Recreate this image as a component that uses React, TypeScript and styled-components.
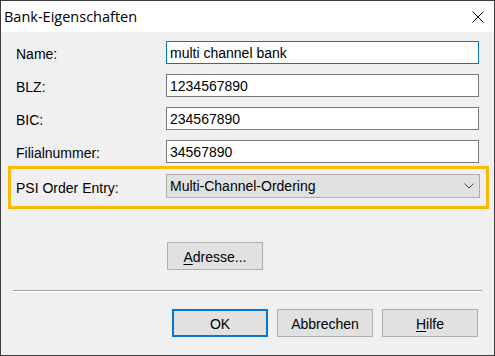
import React from 'react';
import styled, { createGlobalStyle } from 'styled-components';

const GlobalStyle = createGlobalStyle`
  html, body {
    margin: 0;
    padding: 0;
    background: #ffffff;
  }
`;

const Window = styled.div`
  width: 495px;
  height: 356px;
  box-sizing: border-box;
  border: 1px solid #3c3c3c;
  display: flex;
  flex-direction: column;
  font-family: 'Liberation Sans', Arial, sans-serif;
  font-size: 14px;
  color: #000;
`;

const TitleBar = styled.div`
  height: 31px;
  flex: none;
  background: #ffffff;
  display: flex;
  align-items: center;
  justify-content: space-between;
  padding: 0 10px 0 3px;
`;

const Title = styled.span`
  font-family: 'Open Sans', 'Noto Sans', sans-serif;
  font-size: 14.5px;
  color: #000;
  padding-bottom: 1px;
`;

const CloseButton = styled.button`
  border: none;
  background: none;
  padding: 0;
  width: 12px;
  height: 12px;
  display: flex;
  cursor: pointer;
`;

const Body = styled.div`
  flex: 1;
  background: #f0f0f0;
  padding-top: 9px;
  display: flex;
  flex-direction: column;
`;

const Form = styled.div`
  display: grid;
  grid-template-columns: 150px 313px;
  grid-auto-rows: 23px;
  row-gap: 10px;
  padding-left: 15px;
  align-items: center;
`;

const Label = styled.label`
  padding-top: 3px;
`;

const TextInput = styled.input<{ $focused?: boolean }>`
  box-sizing: border-box;
  height: 23px;
  width: 313px;
  margin: 0;
  border: 1px solid ${(p) => (p.$focused ? '#0078d7' : '#7a7a7a')};
  background: #fff;
  padding: 0 3px;
  font: inherit;
  color: #000;
  outline: none;
`;

const Highlight = styled.div`
  margin: 3px 0 0 7px;
  width: 481px;
  box-sizing: border-box;
  border: 3px solid #fbb900;
  padding: 5px 6px 8px 5px;
  display: grid;
  grid-template-columns: 150px 1fr;
  align-items: center;
`;

const Select = styled.div`
  box-sizing: border-box;
  height: 24px;
  border: 1px solid #adadad;
  background: #e1e1e1;
  display: flex;
  align-items: center;
  justify-content: space-between;
  padding: 0 5px 0 3px;
`;

const Button = styled.button<{ $default?: boolean }>`
  box-sizing: border-box;
  width: 96px;
  height: 28px;
  margin: 0;
  background: #e1e1e1;
  border: ${(p) => (p.$default ? '2px solid #0078d7' : '1px solid #adadad')};
  font: inherit;
  color: #000;
  padding: 0;
  padding-top: 1px;
`;

const AddressRow = styled.div`
  margin-top: 33px;
  padding-left: 166px;
`;

const Separator = styled.hr`
  margin: 20px 12px 0 12px;
  width: 469px;
  border: none;
  border-top: 1px solid #a0a0a0;
  border-bottom: 1px solid #ffffff;
  height: 0;
`;

const ButtonRow = styled.div`
  margin-top: 17px;
  padding-left: 171px;
  display: flex;
  gap: 9px;
`;

const Accel = styled.span`
  text-decoration: underline;
  text-underline-offset: 2px;
`;

const fields = [
  { label: 'Name:', value: 'multi channel bank', focused: true },
  { label: 'BLZ:', value: '1234567890' },
  { label: 'BIC:', value: '234567890' },
  { label: 'Filialnummer:', value: '34567890' },
];

const App: React.FC = () => {
  return (
    <>
      <GlobalStyle />
      <Window>
        <TitleBar>
          <Title>Bank-Eigenschaften</Title>
          <CloseButton aria-label='close'>
            <svg width='12' height='12' viewBox='0 0 12 12'>
              <path d='M0.5 0.5 L11.5 11.5 M11.5 0.5 L0.5 11.5' stroke='#000' strokeWidth='1' />
            </svg>
          </CloseButton>
        </TitleBar>
        <Body>
          <Form>
            {fields.map((f) => (
              <React.Fragment key={f.label}>
                <Label>{f.label}</Label>
                <TextInput $focused={f.focused} defaultValue={f.value} />
              </React.Fragment>
            ))}
          </Form>
          <Highlight>
            <Label>PSI Order Entry:</Label>
            <Select>
              <span>Multi-Channel-Ordering</span>
              <svg width='10' height='6' viewBox='0 0 10 6'>
                <path d='M0.5 0.5 L5 5 L9.5 0.5' stroke='#444' strokeWidth='1' fill='none' />
              </svg>
            </Select>
          </Highlight>
          <AddressRow>
            <Button>
              <Accel>A</Accel>dresse...
            </Button>
          </AddressRow>
          <Separator />
          <ButtonRow>
            <Button $default>OK</Button>
            <Button>Abbrechen</Button>
            <Button>
              <Accel>H</Accel>ilfe
            </Button>
          </ButtonRow>
        </Body>
      </Window>
    </>
  );
};

export default App;
